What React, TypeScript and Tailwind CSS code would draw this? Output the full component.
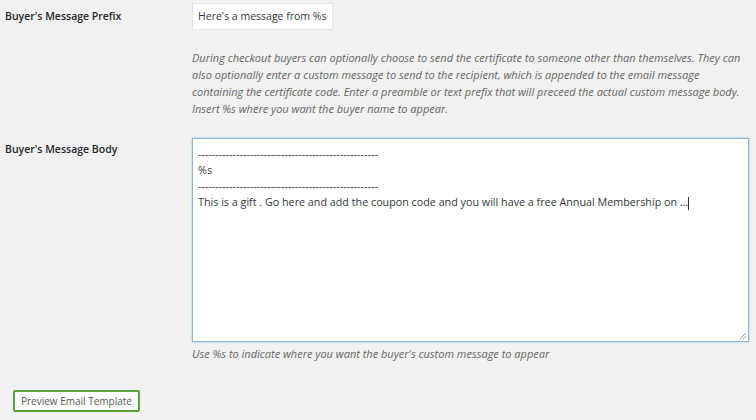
import React from 'react';

const font = { fontFamily: '"Open Sans", "Noto Sans", sans-serif' };
const dashes = '----------------------------------------------------';

export default function App() {
  return (
    <div className="w-[756px] h-[420px] bg-[#f1f1f1] text-[#23282d] overflow-hidden relative" style={font}>
      {/* Prefix row */}
      <div className="flex pt-[3px]">
        <div className="w-[192px] shrink-0 pl-[5px] pt-[6px] text-[10.5px] font-semibold">Buyer&apos;s Message Prefix</div>
        <div className="flex flex-col">
          <div className="w-[141px] h-[27px] bg-white border border-[#e5e5e5] flex items-center pl-[5px] text-[10.5px] text-[#32373c] whitespace-nowrap overflow-hidden">
            Here&apos;s a message from %s
          </div>
          <p className="mt-[19px] w-[556px] text-[11px] leading-[17px] italic text-[#666]">
            During checkout buyers can optionally choose to send the certificate to someone other than themselves. They can also optionally enter a custom message to send to the recipient, which is appended to the email message containing the certificate code. Enter a preamble or text prefix that will preceed the actual custom message body. Insert %s where you want the buyer name to appear.
          </p>
        </div>
      </div>

      {/* Body row */}
      <div className="flex mt-[21px]">
        <div className="w-[192px] shrink-0 pl-[5px] pt-[4px] text-[10.5px] font-semibold">Buyer&apos;s Message Body</div>
        <div className="flex flex-col">
          <div className="relative w-[557px] h-[204px] bg-white border border-[#8db2dc] shadow-[0_0_2px_rgba(30,140,190,0.4)] px-[5px] pt-[7px] text-[10.75px] leading-[16px] text-[#32373c]">
            <div>{dashes}</div>
            <div>%s</div>
            <div>{dashes}</div>
            <div className="whitespace-nowrap">
              This is a gift . Go here and add the coupon code and you will have a free Annual Membership on ...
              <span className="inline-block w-px h-[13px] bg-[#333] align-middle" />
            </div>
            <svg className="absolute right-[1px] bottom-[1px]" width="9" height="9" viewBox="0 0 9 9">
              <path d="M8 2 L2 8 M8 5 L5 8" stroke="#999" strokeWidth="1" fill="none" />
            </svg>
          </div>
          <p className="mt-[3px] text-[11px] leading-[17px] italic text-[#666]">
            Use %s to indicate where you want the buyer&apos;s custom message to appear
          </p>
        </div>
      </div>

      {/* Preview button */}
      <div className="pl-[13px] mt-[25px]">
        <button className="h-[22px] px-[6px] bg-white border-2 border-[#5ba23a] rounded-[2px] text-[10px] text-[#555] leading-none">
          Preview Email Template
        </button>
      </div>
    </div>
  );
}
